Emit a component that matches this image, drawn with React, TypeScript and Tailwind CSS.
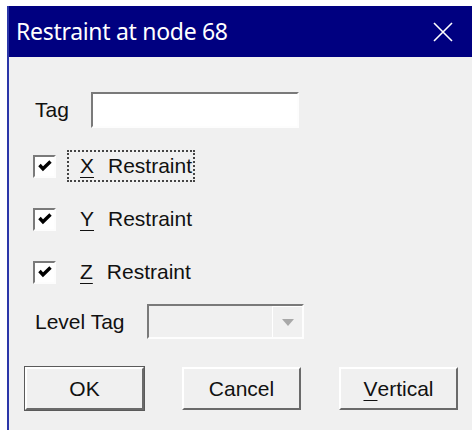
import React from "react";

const font = { fontFamily: '"Liberation Sans", Arial, sans-serif' };

// classic sunken 3D frame (edit / checkbox / combo)
function Sunken({ className, children }: { className?: string; children?: React.ReactNode }) {
  return (
    <div className={`border-t-2 border-l-2 border-t-[#7a7a7a] border-l-[#7a7a7a] border-b-2 border-r-2 border-b-[#fdfdfd] border-r-[#fdfdfd] ${className ?? ""}`}>
      {children}
    </div>
  );
}

function Check({ label, mnemonic, focused }: { label: string; mnemonic: string; focused?: boolean }) {
  return (
    <div className="flex items-center h-[22px]">
      <Sunken className="w-[23px] h-[23px] bg-white flex items-center justify-center">
        <svg width="14" height="12" viewBox="0 0 14 12">
          <path d="M1.5 5 L5 8.8 L12.5 1.5" fill="none" stroke="#000" strokeWidth="3.4" />
        </svg>
      </Sunken>
      <div
        className={`ml-[11px] h-[32px] flex items-center pl-[11px] pr-[1px] text-[21px] text-[#111] ${
          focused ? "border-2 border-dotted border-[#444]" : "border-2 border-transparent"
        }`}
      >
        <span className="underline underline-offset-[4px] decoration-1">{mnemonic}</span>
        <span className="ml-[14px]">{label}</span>
      </div>
    </div>
  );
}

function Button({ children, primary }: { children: React.ReactNode; primary?: boolean }) {
  return (
    <div className={primary ? "border border-[#5a5a5a]" : "border border-transparent"}>
      <div className="w-[119px] h-[43px] bg-[#f0f0f0] border-t-2 border-l-2 border-t-white border-l-white border-b-2 border-r-2 border-b-[#6a6a6a] border-r-[#6a6a6a] flex items-center justify-center text-[21px] text-[#111]">
        {children}
      </div>
    </div>
  );
}

export default function App() {
  return (
    <div className="w-[472px] h-[430px] bg-white pt-[6px] pl-[7px] overflow-hidden" style={font}>
      <div className="h-[424px] flex flex-col border-l-2 border-[#2b36a8]">
        <div className="h-[51px] bg-[#000080] flex items-center justify-between pl-[7px] pr-[19px]">
          <span className="text-white text-[23px] tracking-[-0.3px]" style={{ fontFamily: '"Noto Sans", "Open Sans", sans-serif' }}>
            Restraint at node 68
          </span>
          <svg width="20" height="20" viewBox="0 0 20 20">
            <path d="M1 1 L19 19 M19 1 L1 19" stroke="#fff" strokeWidth="1.6" />
          </svg>
        </div>
        <div className="flex-1 bg-[#f0f0f0] pl-[24px] pr-[13px] flex flex-col">
          <div className="mt-[35px] flex items-center">
            <span className="text-[21px] text-[#111] w-[56px] ml-[2px]">Tag</span>
            <Sunken className="w-[208px] h-[36px] bg-white" />
          </div>
          <div className="mt-[27px] flex flex-col gap-[31px]">
            <Check mnemonic="X" label="Restraint" focused />
            <Check mnemonic="Y" label="Restraint" />
            <Check mnemonic="Z" label="Restraint" />
          </div>
          <div className="mt-[21px] flex items-center">
            <span className="text-[21px] text-[#111] w-[112px] ml-[2px]">Level Tag</span>
            <Sunken className="w-[157px] h-[35px] bg-[#f0f0f0] flex justify-end">
              <div className="w-[30px] h-full border-l border-t border-white flex items-center justify-center">
                <svg width="12" height="7" viewBox="0 0 12 7">
                  <path d="M0 0 L12 0 L6 7 Z" fill="#a8a8a8" />
                </svg>
              </div>
            </Sunken>
          </div>
          <div className="mt-[27px] flex justify-between -ml-[9px]">
            <Button primary>OK</Button>
            <Button>Cancel</Button>
            <Button>
              <span className="underline underline-offset-[4px] decoration-1">V</span>ertical
            </Button>
          </div>
        </div>
      </div>
    </div>
  );
}
